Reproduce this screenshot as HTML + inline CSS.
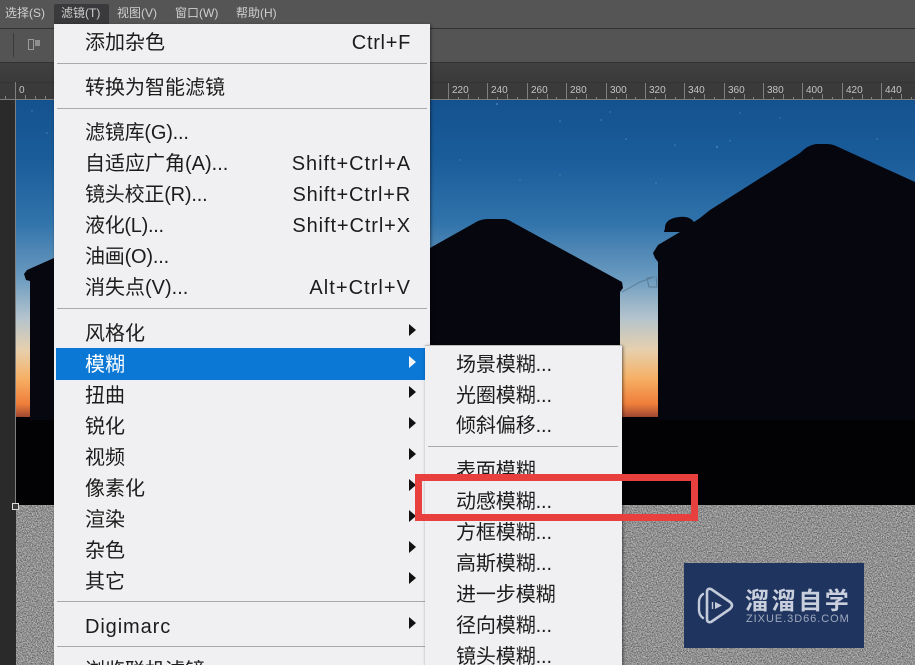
<!DOCTYPE html>
<html>
<head>
<meta charset="utf-8">
<style>
html,body{margin:0;padding:0;background:#555;}
#p{position:relative;width:915px;height:665px;overflow:hidden;background:#545354;font-family:"Liberation Sans","Noto Sans CJK SC",sans-serif;}
.a{position:absolute;}
.m{position:absolute;white-space:nowrap;font-size:12px;color:#cfcfcf;top:5px;line-height:17px;}
.i{position:absolute;left:31px;white-space:nowrap;font-size:20px;line-height:28px;color:#1c1c1c;letter-spacing:0;}
.k{position:absolute;right:19px;white-space:nowrap;font-size:20px;line-height:28px;color:#1c1c1c;letter-spacing:.95px;}
.s{position:absolute;height:1px;background:#a9a9ab;}
.t{position:absolute;left:355px;width:0;height:0;border-left:7px solid #111;border-top:6px solid transparent;border-bottom:6px solid transparent;}
.j{position:absolute;left:31px;white-space:nowrap;font-size:20px;line-height:28px;color:#1c1c1c;letter-spacing:-.1px;}
.r{position:absolute;top:85px;font-size:10px;line-height:12px;color:#c4c4c4;}
</style>
</head>
<body>
<div id="p">
  <!-- chrome -->
  <div class="a" style="left:0;top:0;width:915px;height:28px;background:#565556;"></div>
  <div class="a" style="left:0;top:28px;width:915px;height:1px;background:#333233;"></div>
  <div class="a" style="left:0;top:29px;width:915px;height:33px;background:#555455;"></div>
  <div class="a" style="left:0;top:62px;width:915px;height:1px;background:#333233;"></div>
  <div class="a" style="left:0;top:63px;width:915px;height:20px;background:linear-gradient(#414041,#3b3a3b);"></div>
  <div class="a" style="left:0;top:82px;width:915px;height:18px;background:#3b3a3b;border-top:1px solid #353435;box-sizing:border-box;"></div>
  <div class="a" style="left:0;top:99px;width:915px;height:1px;background:#7d7d7d;"></div>
  <div class="a" style="left:0;top:100px;width:16px;height:565px;background:#2b2a2b;"></div>
  <div class="a" style="left:15px;top:82px;width:1px;height:423px;background:#7f7f7f;"></div>

  <div class="a" style="left:13px;top:33px;width:1px;height:24px;background:#3a393a;"></div>
  <div class="a" style="left:28px;top:39px;width:6px;height:11px;border:1px solid #9a9a9a;box-sizing:border-box;"></div>
  <div class="a" style="left:35px;top:40px;width:5px;height:6px;background:#8f8f8f;"></div>

  <div class="m" style="left:5px;">选择(S)</div>
  <div class="a" style="left:54px;top:4px;width:55px;height:20px;background:#3a393b;border-radius:2px 2px 0 0;"></div>
  <div class="m" style="left:61px;">滤镜(T)</div>
  <div class="m" style="left:117px;">视图(V)</div>
  <div class="m" style="left:175px;">窗口(W)</div>
  <div class="m" style="left:236px;">帮助(H)</div>

  <!-- ruler -->
  <svg class="a" style="left:0;top:82px;" width="915" height="18">
    <g stroke="#7f7f7f" stroke-width="1">
      <path d="M15.5 1V17M5.5 14V17M25.5 13V17M35.5 14V17M45.5 14V17M448.5 1V17M468.5 12V17M487.5 1V17M507.5 12V17M527.5 1V17M547.5 12V17M566.5 1V17M586.5 12V17M606.5 1V17M626.5 12V17M645.5 1V17M665.5 12V17M684.5 1V17M704.5 12V17M724.5 1V17M744.5 12V17M763.5 1V17M783.5 12V17M802.5 1V17M822.5 12V17M842.5 1V17M862.5 12V17M881.5 1V17M901.5 12V17M458.5 15V17M478.5 15V17M497.5 15V17M517.5 15V17M537.5 15V17M556.5 15V17M576.5 15V17M596.5 15V17M616.5 15V17M635.5 15V17M655.5 15V17M675.5 15V17M694.5 15V17M714.5 15V17M734.5 15V17M753.5 15V17M773.5 15V17M793.5 15V17M812.5 15V17M832.5 15V17M852.5 15V17M871.5 15V17M891.5 15V17M911.5 15V17"/>
    </g>
  </svg>
  <div class="r" style="left:19px;">0</div>
  <div class="r" style="left:452px;">220</div>
  <div class="r" style="left:491px;">240</div>
  <div class="r" style="left:531px;">260</div>
  <div class="r" style="left:570px;">280</div>
  <div class="r" style="left:610px;">300</div>
  <div class="r" style="left:649px;">320</div>
  <div class="r" style="left:688px;">340</div>
  <div class="r" style="left:728px;">360</div>
  <div class="r" style="left:767px;">380</div>
  <div class="r" style="left:806px;">400</div>
  <div class="r" style="left:846px;">420</div>
  <div class="r" style="left:885px;">440</div>

  <!-- canvas -->
  <svg class="a" style="left:16px;top:100px;" width="899" height="565" viewBox="16 100 899 565">
    <defs>
      <linearGradient id="sky" x1="0" y1="100" x2="0" y2="420" gradientUnits="userSpaceOnUse">
        <stop offset="0" stop-color="#14528f"/>
        <stop offset=".18" stop-color="#1a5c9a"/>
        <stop offset=".38" stop-color="#3072aa"/>
        <stop offset=".56" stop-color="#6d9cc0"/>
        <stop offset=".68" stop-color="#b3c3cd"/>
        <stop offset=".78" stop-color="#e6d0ae"/>
        <stop offset=".87" stop-color="#f6b065"/>
        <stop offset=".95" stop-color="#ef7e3a"/>
        <stop offset="1" stop-color="#8a3a30"/>
      </linearGradient>
      <filter id="noise" x="0" y="0" width="100%" height="100%" color-interpolation-filters="sRGB">
        <feTurbulence type="fractalNoise" baseFrequency=".8" numOctaves="2" seed="7"/>
        <feColorMatrix type="matrix" values=".75 0 0 0 .19  .75 0 0 0 .19  .75 0 0 0 .19  0 0 0 0 1"/>
      </filter>
    </defs>
    <rect x="16" y="100" width="899" height="320" fill="url(#sky)"/>
    <g fill="#8fb4d8" opacity=".45">
      <circle cx="626" cy="139" r=".8"/><circle cx="675" cy="145" r=".8"/><circle cx="717" cy="147" r="1"/><circle cx="730" cy="141" r=".7"/><circle cx="560" cy="121" r=".8"/><circle cx="610" cy="112" r=".7"/><circle cx="497" cy="104" r="1"/><circle cx="601" cy="120" r=".8"/><circle cx="740" cy="113" r=".7"/><circle cx="877" cy="139" r=".8"/><circle cx="656" cy="183" r=".7"/><circle cx="460" cy="160" r=".7"/><circle cx="520" cy="180" r=".6"/><circle cx="47" cy="133" r=".7"/><circle cx="32" cy="111" r=".7"/><circle cx="780" cy="118" r=".6"/><circle cx="560" cy="175" r=".6"/>
    </g>
    <rect x="16" y="417" width="899" height="88" fill="#020103"/>
    <path d="M54 258 L27 270 L24 274 L26 280 L30 281 L30 420 L54 420 Z" fill="#07070f"/>
    <path d="M430 248 L478 221 Q483 219 488 219 L503 219 Q508 219 512 222 L622 282 L623 288 L620 292 L620 420 L430 420 Z" fill="#06060e"/>
    <path d="M915 182 L836 146 Q832 144 826 144 L816 144 Q808 145 800 153 L710 210 L700 218 L694 222 C691 218 686 216 679 217 C671 218 665 221 665 228 L664 232 L680 232 L658 245 L653 253 L655 258 L658 262 L658 420 L915 420 Z" fill="#06060e"/>
    <path d="M622 292 L640 282 L654 277 L647 278 L649 287 L657 287 L656 276" fill="none" stroke="#5b7d99" stroke-width="1"/>
    <rect x="16" y="505" width="899" height="160" fill="#8f8f8f"/>
    <rect x="16" y="505" width="899" height="160" filter="url(#noise)"/>
  </svg>
  <div class="a" style="left:12px;top:503px;width:5px;height:5px;background:#3a3a3a;border:1px solid #dcdcdc;"></div>

  <!-- logo -->
  <div class="a" style="left:684px;top:563px;width:180px;height:85px;background:#1f3560;"></div>
  <svg class="a" style="left:684px;top:563px;" width="180" height="85" viewBox="0 0 180 85">
    <path d="M19 31 Q15 34 15 39 V47 Q15 52 19 55" fill="none" stroke="#c3cad9" stroke-width="2.4" stroke-linecap="round"/>
    <path d="M27 26 Q23 25 23 29 V56 Q23 60 27 59 L46 46 Q50 42 46 39 Z" fill="none" stroke="#c3cad9" stroke-width="2.6" stroke-linejoin="round"/>
    <path d="M28.500 39 V46" stroke="#c3cad9" stroke-width="1.400" fill="none"/>
    <path d="M31 39 L38 42.500 L31 46 Z" fill="#c3cad9"/>
  </svg>
  <div class="a" style="left:745px;top:583px;font-size:24px;line-height:32px;font-weight:bold;color:#c9cfdc;white-space:nowrap;letter-spacing:2.6px;font-family:'Noto Sans CJK SC',sans-serif;">溜溜自学</div>
  <div class="a" style="left:746px;top:612px;font-size:11px;line-height:14px;color:#a0a9be;white-space:nowrap;letter-spacing:.95px;">ZIXUE.3D66.COM</div>

  <!-- main menu -->
  <div class="a" style="left:54px;top:24px;width:376px;height:660px;background:#f0f0f2;box-shadow:1px 1px 3px rgba(0,0,0,.5);">
    <div class="i" style="top:5px;">添加杂色</div><div class="k" style="top:5px;letter-spacing:.7px;">Ctrl+F</div>
    <div class="s" style="left:3px;width:370px;top:39px;"></div>
    <div class="i" style="top:50px;">转换为智能滤镜</div>
    <div class="s" style="left:3px;width:370px;top:84px;"></div>
    <div class="i" style="top:95px;letter-spacing:-.2px;">滤镜库(G)...</div>
    <div class="i" style="top:126px;">自适应广角(A)...</div><div class="k" style="top:126px;">Shift+Ctrl+A</div>
    <div class="i" style="top:157px;letter-spacing:-.2px;">镜头校正(R)...</div><div class="k" style="top:157px;letter-spacing:.8px;">Shift+Ctrl+R</div>
    <div class="i" style="top:188px;letter-spacing:-.3px;">液化(L)...</div><div class="k" style="top:188px;letter-spacing:.9px;">Shift+Ctrl+X</div>
    <div class="i" style="top:219px;letter-spacing:-.2px;">油画(O)...</div>
    <div class="i" style="top:250px;">消失点(V)...</div><div class="k" style="top:250px;letter-spacing:1.05px;">Alt+Ctrl+V</div>
    <div class="s" style="left:3px;width:370px;top:284px;"></div>
    <div class="i" style="top:296px;">风格化</div><div class="t" style="top:300px;"></div>
    <div class="a" style="left:2px;top:324px;width:369px;height:32px;background:#0a78d4;"></div>
    <div class="i" style="top:327px;color:#fff;">模糊</div><div class="t" style="top:332px;border-left-color:#f2f6fb;"></div>
    <div class="i" style="top:358px;">扭曲</div><div class="t" style="top:362px;"></div>
    <div class="i" style="top:389px;">锐化</div><div class="t" style="top:393px;"></div>
    <div class="i" style="top:420px;">视频</div><div class="t" style="top:424px;"></div>
    <div class="i" style="top:451px;">像素化</div><div class="t" style="top:455px;"></div>
    <div class="i" style="top:482px;">渲染</div><div class="t" style="top:486px;"></div>
    <div class="i" style="top:513px;">杂色</div><div class="t" style="top:517px;"></div>
    <div class="i" style="top:544px;">其它</div><div class="t" style="top:548px;"></div>
    <div class="s" style="left:3px;width:370px;top:577px;"></div>
    <div class="i" style="top:589px;letter-spacing:.9px;">Digimarc</div><div class="t" style="top:593px;"></div>
    <div class="s" style="left:3px;width:370px;top:622px;"></div>
    <div class="i" style="top:633px;">浏览联机滤镜...</div>
  </div>

  <!-- submenu -->
  <div class="a" style="left:425px;top:345px;width:197px;height:330px;background:#f0f0f2;box-shadow:1px 1px 3px rgba(0,0,0,.55);border-top:1px solid #bdbdbf;box-sizing:border-box;">
    <div class="j" style="top:5px;">场景模糊...</div>
    <div class="j" style="top:36px;">光圈模糊...</div>
    <div class="j" style="top:66px;">倾斜偏移...</div>
    <div class="s" style="left:3px;width:190px;top:100px;"></div>
    <div class="j" style="top:111px;">表面模糊</div>
    <div class="j" style="top:142px;">动感模糊...</div>
    <div class="j" style="top:173px;">方框模糊...</div>
    <div class="j" style="top:204px;">高斯模糊...</div>
    <div class="j" style="top:235px;">进一步模糊</div>
    <div class="j" style="top:266px;">径向模糊...</div>
    <div class="j" style="top:297px;">镜头模糊...</div>
  </div>

  <!-- red highlight -->
  <div class="a" style="left:415px;top:474px;width:283px;height:47px;border:7px solid #e8403f;box-sizing:border-box;"></div>
</div>
</body>
</html>
